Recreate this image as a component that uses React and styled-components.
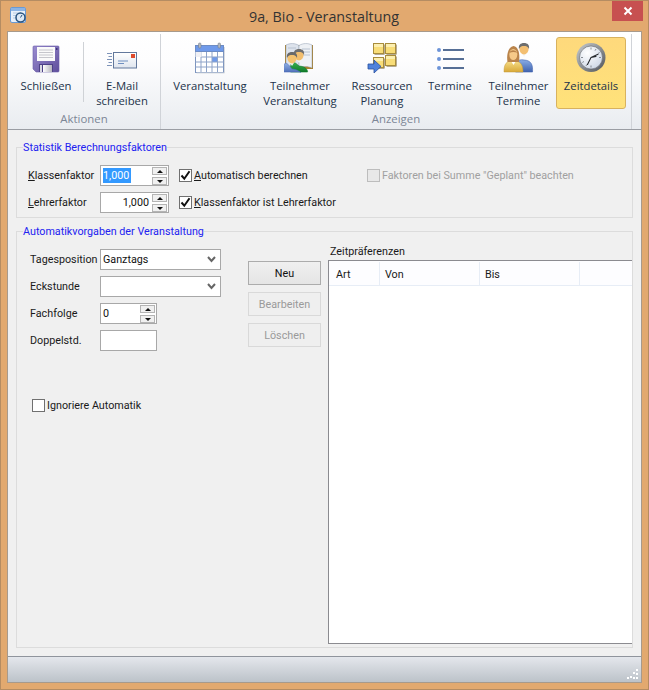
import React from "react";
import styled, { createGlobalStyle } from "styled-components";

const Global = createGlobalStyle`
  html, body { margin: 0; padding: 0; width: 649px; height: 690px; overflow: hidden; }
  #root { width: 649px; height: 690px; }
  * { box-sizing: border-box; }
`;

const Win = styled.div`
  width: 649px; height: 690px;
  background: #e2a96f;
  border: 1px solid #b58c62;
  padding: 0 6px 6px;
  display: flex; flex-direction: column;
  font-family: Roboto, "Open Sans", sans-serif;
  font-size: 10.75px;
  color: #1a1a1a;
`;
const TitleBar = styled.div`
  height: 30px; flex: none;
  display: grid; grid-template-columns: 1fr auto 1fr; align-items: start;
  margin-right: -1px;
`;
const TitleIcon = styled.svg`
  display: block; width: 16px; height: 16px; margin: 6px 0 0 3px;
`;
const TitleText = styled.div`
  font-family: "Open Sans", sans-serif;
  font-size: 14.3px; line-height: 30px; color: #333; padding: 1px 2px 0 0;
`;
const Close = styled.div`
  justify-self: end; width: 31px; height: 20px;
  background: #c75050; display: flex; align-items: center; justify-content: center;
`;
const Inner = styled.div`
  flex: 1; display: flex; flex-direction: column; min-height: 0;
  background: #f0f0f0; border: 1px solid #a79a8c;
`;
const Ribbon = styled.div`
  height: 98px; flex: none; padding: 2px 9px 0 0;
  display: flex;
  background: linear-gradient(#ffffff, #fdfdfe 30%, #e9ecf0);
  border-bottom: 1px solid #9a9da3;
  font-family: "Open Sans", sans-serif;
`;
const RGroup = styled.div`
  display: flex; flex-direction: column; align-items: stretch;
  width: ${p => p.$w}px; padding-top: 3px;
  border-right: 1px solid #d0d3d8;
`;
const RItems = styled.div`
  display: flex; height: 72px; padding-left: ${p => p.$pl}px;
`;
const RLabel = styled.div`
  text-align: center; color: #7c8696; font-size: 11.4px; line-height: 18px; padding-top: 1px;
`;
const RBtn = styled.div`
  width: ${p => p.$w}px; height: 72px; flex: none;
  padding-top: ${p => (p.$active ? 4 : 5)}px;
  display: flex; flex-direction: column; align-items: center;
  text-align: center; line-height: 15px; color: #22324a; font-size: 11.3px;
  ${p => p.$active && `
    background: linear-gradient(#fed97c, #ffe27a);
    border: 1px solid #d8b25e;
    border-radius: 3px;
  `}
`;
const RIcon = styled.svg`
  display: block; width: 32px; height: 32px; flex: none; margin-bottom: 4px;
`;
const RSep = styled.div`
  width: 1px; height: 60px; margin-top: 5px; flex: none; background: #cfd2d6;
`;
const Main = styled.div`
  flex: 1; min-height: 0; padding: 10px 8px 8px 8px;
  display: flex; flex-direction: column; gap: 6px;
`;
const Group = styled.fieldset`
  margin: 0; min-width: 0;
  border: 1px solid #dcdcdc;
  padding: 0;
  ${p => p.$grow && "flex: 1; min-height: 0; display: flex; flex-direction: column;"}
`;
const Legend = styled.legend`
  margin-left: 6px; padding: 0; line-height: 15px; color: #2222f0;
`;
const FactorBody = styled.div`
  padding: 10px 0 4px 11px;
  display: grid; grid-template-columns: 72px 79px 188px auto; grid-auto-rows: 21px; row-gap: 6px;
  align-items: center;
`;
const Label = styled.div`
  line-height: 15px; white-space: nowrap;
`;
const Field = styled.div`
  position: relative;
  width: ${p => p.$w}px; height: 21px; flex: none;
  background: #fff; border: 1px solid #a8a8a8;
  display: flex; align-items: center;
  justify-content: ${p => (p.$right ? "flex-end" : "flex-start")};
  padding: 0 ${p => (p.$right ? 19 : 2)}px 0 2px;
  line-height: 15px; color: #111;
`;
const Selected = styled.span`
  background: #3399ff; color: #fff; line-height: 15px; padding: 0 2px 0 0;
`;
const SpinCol = styled.div`
  position: absolute; right: 1px; top: 1px; width: 15px;
  display: flex; flex-direction: column; gap: 2px;
`;
const SpinBtn = styled.div`
  height: 8px; background: #f0f0f0; border: 1px solid #b4b4b4;
  display: flex; align-items: center; justify-content: center;
  &::after {
    content: ""; display: block; width: 0; height: 0;
    border-left: 3px solid transparent; border-right: 3px solid transparent;
    ${p => (p.$down ? "border-top: 3px solid #111;" : "border-bottom: 3px solid #111;")}
  }
`;
const Check = styled.div`
  display: flex; align-items: center; gap: 2px; line-height: 15px; white-space: nowrap;
  color: ${p => (p.$disabled ? "#a0a0a0" : "inherit")};
`;
const Box = styled.div`
  width: 13px; height: 13px; flex: none;
  background: ${p => (p.$disabled ? "#e8e8e8" : "#fff")};
  border: 1px solid ${p => (p.$disabled ? "#bdbdbd" : "#707070")};
  display: flex; align-items: center; justify-content: center;
`;
const AutoBody = styled.div`
  flex: 1; min-height: 0; display: flex;
`;
const FormCol = styled.div`
  width: 231px; flex: none; padding: 10px 0 0 13px;
  display: flex; flex-direction: column; gap: 6px;
`;
const FormRow = styled.div`
  display: flex; align-items: center; height: 21px;
`;
const FormLabel = styled(Label)`
  width: 70px; flex: none;
`;
const Chevron = styled.svg`
  position: absolute; right: 4px; top: 6px; width: 9px; height: 7px;
`;
const IgnoreRow = styled.div`
  margin: 41px 0 0 2px;
`;
const BtnCol = styled.div`
  width: 73px; flex: none; padding-top: 22px;
  display: flex; flex-direction: column; gap: 7px;
`;
const Btn = styled.div`
  height: 24px; display: flex; align-items: center; justify-content: center;
  border: 1px solid ${p => (p.$disabled ? "#d9d9d9" : "#acacac")};
  background: ${p => (p.$disabled ? "#efefef" : "linear-gradient(#f0f0f0, #e5e5e5)")};
  color: ${p => (p.$disabled ? "#9a9a9a" : "#111")};
`;
const TableCol = styled.div`
  flex: 1; min-width: 0; margin-left: 7px; padding: 5px 0 3px;
  display: flex; flex-direction: column;
`;
const TableTitle = styled.div`
  height: 16px; line-height: 15px; padding-left: 2px;
`;
const Table = styled.div`
  flex: 1; min-height: 0; background: #fff;
  border: 1px solid #8b8b90; border-right: 0;
`;
const THead = styled.div`
  height: 25px; display: flex; background: #fdfdff;
  border-bottom: 1px solid #e7edf6;
`;
const TH = styled.div`
  width: ${p => p.$w}px; flex: none; padding: 1px 0 0 ${p => p.$pl}px;
  line-height: 23px; border-right: 1px solid #e7edf6;
  margin: 1px 0 0;
`;
const Status = styled.div`
  height: 26px; flex: none; position: relative;
  background: linear-gradient(#e4e7ec, #bcc2c9);
  border-top: 1px solid #8f949c;
`;
const Grip = styled.svg`
  position: absolute; right: 2px; bottom: 2px; width: 12px; height: 11px;
`;

const Floppy = () => (
  <RIcon viewBox="0 0 32 32">
    <defs>
      <linearGradient id="fp" x1="0" x2="1" y1="0" y2="1">
        <stop offset="0" stopColor="#9a8cd0" /><stop offset="1" stopColor="#5f4f9c" />
      </linearGradient>
      <linearGradient id="fs" x1="0" x2="1" y1="0" y2="0">
        <stop offset="0" stopColor="#fff" /><stop offset="1" stopColor="#b5b5bd" />
      </linearGradient>
    </defs>
    <path d="M3 5a1 1 0 0 1 1-1h24a1 1 0 0 1 1 1v24a1 1 0 0 1-1 1H6l-3-3z" fill="url(#fp)" stroke="#6a5ca8" strokeWidth=".6" />
    <rect x="7" y="5" width="18" height="14" fill="#fafafa" />
    <path d="M9 8h14M9 10.500h14M9 13h14M9 15.500h14" stroke="#c6c6cc" strokeWidth="1" />
    <rect x="9" y="22" width="14" height="8" fill="#4d4187" />
    <rect x="13" y="23" width="9" height="7" fill="url(#fs)" />
    <rect x="10" y="23" width="2" height="7" fill="#d8d8e2" />
    <rect x="26" y="6" width="1.500" height="2" fill="#3f3478" />
  </RIcon>
);
const Mail = () => (
  <RIcon viewBox="0 0 32 32">
    <defs>
      <linearGradient id="ml" x1="0" x2="0" y1="0" y2="1">
        <stop offset="0" stopColor="#fff" /><stop offset="1" stopColor="#dfe5ee" />
      </linearGradient>
    </defs>
    <path d="M1 11.500h5M2.500 14.500h3.500M1 17.500h5M2.500 20.500h3.500M1 23.500h5" stroke="#7d93b8" strokeWidth="1" />
    <rect x="7.500" y="10.500" width="23" height="15.500" fill="url(#ml)" stroke="#62789c" />
    <rect x="25" y="12" width="4" height="4" fill="#dd4a2c" />
    <path d="M12 19h10M12 21.500h6" stroke="#6f8fc0" strokeWidth="1" />
  </RIcon>
);
const Calendar = () => (
  <RIcon viewBox="0 0 32 32">
    <rect x="1.500" y="3.500" width="28" height="27" fill="#fff" stroke="#7d95bf" />
    <rect x="1.500" y="3.500" width="28" height="6" fill="#6f9aea" stroke="#6d8cc4" />
    <rect x="4.500" y="1" width="2.500" height="5" rx="1" fill="#b5bac2" stroke="#6c7480" strokeWidth=".5" />
    <rect x="24" y="1" width="2.500" height="5" rx="1" fill="#b5bac2" stroke="#6c7480" strokeWidth=".5" />
    <rect x="18" y="15" width="5.500" height="5" fill="#6f9aea" />
    <path d="M7 10v20M12.500 10v20M18 10v20M23.500 10v20M7 15h22.500M1.500 20h28M1.500 25h28" stroke="#8ea3c8" strokeWidth="1" fill="none" />
    <path d="M1.500 10h6v5h-6z" fill="#f0f0f4" />
    <path d="M30.500 5v26h-28" stroke="#d8dbe0" fill="none" />
  </RIcon>
);
const person = (cx, top, hair, skin, c1, c2, id) => (
  <g>
    <defs>
      <linearGradient id={id} x1="0" x2="0" y1="0" y2="1">
        <stop offset="0" stopColor={c1} /><stop offset="1" stopColor={c2} />
      </linearGradient>
    </defs>
    <path d={`M${cx - 8.500} 30c-.5-8 1-13.500 8.500-${30 - top - 10 - 7}c7.500 .5 9 5 8.500 ${30 - top - 10 - 7}z`} fill={`url(#${id})`} stroke={c2} strokeWidth=".6" />
    <path d={`M${cx - 2.500} ${top + 10}l2.500 4l2.500-4z`} fill="#f5f5f5" />
    <ellipse cx={cx} cy={top + 6} rx="4.600" ry="5.400" fill={skin} />
    <path d={`M${cx - 5} ${top + 6}c-.8-4 1.500-6 5-6c3.500 0 5.800 2 5 6c-1-2.500-3-3-5-3c-2 0-4 .5-5 3z`} fill={hair} />
  </g>
);
const BookPeople = () => (
  <RIcon viewBox="0 0 32 32">
    <path d="M1 3h28v24H1z" fill="#a9802c" />
    <path d="M2 3c4-2 9-2 13 .5V26c-4-2-9-2-13 0z" fill="#dde3ec" stroke="#8f9cb0" strokeWidth=".5" />
    <path d="M15 3.500c4-2.500 9-2.500 13-.5v23c-4-2-9-2-13 0z" fill="#eef1f5" stroke="#8f9cb0" strokeWidth=".5" />
    <path d="M18 7h8M18 10h8M18 13h8M4 6h8" stroke="#b8c2d0" strokeWidth="1" />
    {person(15, 7, "#6f6f6f", "#f2be6e", "#38b04e", "#0f7a2a", "bp1")}
    {person(8, 10, "#6a6a6a", "#f4c26f", "#8fb0e4", "#4d6db8", "bp2")}
  </RIcon>
);
const sq = (x, y, s = 10) => (
  <g>
    <rect x={x + 1.500} y={y + 1.500} width={s} height={s} fill="#6e5a28" />
    <rect x={x + .5} y={y + .5} width={s} height={s} fill="#f8dd78" stroke="#a88c3c" />
    <rect x={x + 1} y={y + 1} width={s - 1} height="3" fill="#fcefb0" />
  </g>
);
const Resources = () => (
  <RIcon viewBox="0 0 32 32">
    {sq(7, 1)}
    {sq(19, 1)}
    {sq(19, 13)}
    {sq(7, 15)}
    <path d="M2 22h6v-4l7 6.500l-7 6.500v-4H2z" fill="#4f82dc" stroke="#2a50a0" strokeWidth=".8" />
  </RIcon>
);
const ListIcon = () => (
  <RIcon viewBox="0 0 32 32">
    {[8, 17, 26].map(y => (
      <g key={y}>
        <circle cx="5" cy={y} r="2" fill="#6d94d8" />
        <rect x="9" y={y - 1} width="21" height="2" fill="#566f96" />
      </g>
    ))}
  </RIcon>
);
const Couple = () => (
  <RIcon viewBox="0 0 32 32">
    {person(21, 1, "#6d6d6d", "#f3bf72", "#8aaee6", "#3f62ae", "cp1")}
    <defs>
      <linearGradient id="cw" x1="0" x2="0" y1="0" y2="1">
        <stop offset="0" stopColor="#f8df8a" /><stop offset="1" stopColor="#d8a838" />
      </linearGradient>
    </defs>
    <path d="M1 30c0-8 2-11 9.500-11.500C17 19 20 22 20 30z" fill="url(#cw)" stroke="#c09a3c" strokeWidth=".5" />
    <path d="M8 19l2.500 4l2.500-4z" fill="#fff" />
    <path d="M4.500 20c-1-6 0-15 6-16c5.500 1 6.500 9 5.500 16z" fill="#b9834a" />
    <ellipse cx="10.300" cy="12.500" rx="4" ry="5.500" fill="#f6c988" />
    <path d="M6.300 11c1-3 5.500-4 8 0c-2-1.500-5.500-1.500-8 0z" fill="#b9834a" />
  </RIcon>
);
const Clock = () => (
  <RIcon viewBox="0 0 32 32">
    <defs>
      <linearGradient id="ck" x1="0" x2="1" y1="0" y2="1">
        <stop offset="0" stopColor="#c8ccd0" /><stop offset="1" stopColor="#4f5358" />
      </linearGradient>
      <radialGradient id="cf" cx=".35" cy=".3" r=".9">
        <stop offset="0" stopColor="#ffffff" /><stop offset="1" stopColor="#c7d2e2" />
      </radialGradient>
    </defs>
    <circle cx="16" cy="15.500" r="14.500" fill="url(#ck)" />
    <circle cx="16" cy="15.500" r="11.500" fill="url(#cf)" stroke="#5a5e64" strokeWidth=".6" />
    <path d="M16 5.500v2M16 23.500v2M6 15.500h2M24 15.500h2M21 7l-1 1.700M11 24l1-1.700M24.700 10.500l-1.700 1M7.300 20.500l1.700-1" stroke="#70757c" strokeWidth=".8" />
    <path d="M16 15.500l7-3.200M16 15.500l-3.500 7M16 15.500l5-1" stroke="#25282c" strokeWidth="1.100" strokeLinecap="round" />
  </RIcon>
);

const CheckMark = () => (
  <svg width="11" height="11" viewBox="0 0 11 11">
    <path d="M1.500 5.500l2.800 3.200L9.500 1.300" fill="none" stroke="#111" strokeWidth="2" />
  </svg>
);
const ChevronIcon = () => (
  <Chevron viewBox="0 0 9 7">
    <path d="M1 1l3.500 4L8 1" fill="none" stroke="#666" strokeWidth="2" />
  </Chevron>
);
const Spin = () => (
  <SpinCol>
    <SpinBtn />
    <SpinBtn $down />
  </SpinCol>
);

export default function App() {
  return (
    <Win>
      <Global />
      <TitleBar>
        <TitleIcon viewBox="0 0 16 16">
          <rect x=".5" y=".5" width="15" height="15" rx="1.500" fill="#e8f0fa" stroke="#6a9ad4" />
          <rect x="1" y="1" width="14" height="3" fill="#8db4e4" />
          <path d="M3 6h8M3 8.500h4M3 11h4" stroke="#b6cbe4" />
          <circle cx="10.500" cy="10.500" r="4.500" fill="#dce8f6" stroke="#27527f" strokeWidth="1.500" />
          <path d="M10.500 10.500l1.500-2.500" stroke="#27527f" />
        </TitleIcon>
        <TitleText>9a, Bio - Veranstaltung</TitleText>
        <Close>
          <svg width="10" height="10" viewBox="0 0 10 10">
            <path d="M1.500 1.500l7 7M8.500 1.500l-7 7" stroke="#fff" strokeWidth="2" />
          </svg>
        </Close>
      </TitleBar>
      <Inner>
        <Ribbon>
          <RGroup $w={153}>
            <RItems $pl={1}>
              <RBtn $w={74}><Floppy />Schließen</RBtn>
              <RSep />
              <RBtn $w={76}><Mail />E-Mail<br />schreiben</RBtn>
            </RItems>
            <RLabel>Aktionen</RLabel>
          </RGroup>
          <RGroup $w={471}>
            <RItems $pl={4}>
              <RBtn $w={90}><Calendar />Veranstaltung</RBtn>
              <RBtn $w={90}><BookPeople />Teilnehmer<br />Veranstaltung</RBtn>
              <RBtn $w={74}><Resources />Ressourcen<br />Planung</RBtn>
              <RBtn $w={62}><ListIcon />Termine</RBtn>
              <RBtn $w={75}><Couple />Teilnehmer<br />Termine</RBtn>
              <RBtn $w={70} $active><Clock />Zeitdetails</RBtn>
            </RItems>
            <RLabel>Anzeigen</RLabel>
          </RGroup>
        </Ribbon>
        <Main>
          <Group>
            <Legend>Statistik Berechnungsfaktoren</Legend>
            <FactorBody>
              <Label><u>K</u>lassenfaktor</Label>
              <Field $w={69}>
                <Selected>1,000</Selected>
                <Spin />
              </Field>
              <Check><Box><CheckMark /></Box><span><u>A</u>utomatisch berechnen</span></Check>
              <Check $disabled><Box $disabled />Faktoren bei Summe "Geplant" beachten</Check>
              <Label><u>L</u>ehrerfaktor</Label>
              <Field $w={69} $right>
                1,000
                <Spin />
              </Field>
              <Check><Box><CheckMark /></Box><span><u>K</u>lassenfaktor ist Lehrerfaktor</span></Check>
            </FactorBody>
          </Group>
          <Group $grow>
            <Legend>Automatikvorgaben der Veranstaltung</Legend>
            <AutoBody>
              <FormCol>
                <FormRow>
                  <FormLabel>Tagesposition</FormLabel>
                  <Field $w={121}>Ganztags<ChevronIcon /></Field>
                </FormRow>
                <FormRow>
                  <FormLabel>Eckstunde</FormLabel>
                  <Field $w={121}><ChevronIcon /></Field>
                </FormRow>
                <FormRow>
                  <FormLabel>Fachfolge</FormLabel>
                  <Field $w={57}>0<Spin /></Field>
                </FormRow>
                <FormRow>
                  <FormLabel>Doppelstd.</FormLabel>
                  <Field $w={57} />
                </FormRow>
                <IgnoreRow>
                  <Check><Box />Ignoriere Automatik</Check>
                </IgnoreRow>
              </FormCol>
              <BtnCol>
                <Btn>Neu</Btn>
                <Btn $disabled>Bearbeiten</Btn>
                <Btn $disabled>Löschen</Btn>
              </BtnCol>
              <TableCol>
                <TableTitle>Zeitpräferenzen</TableTitle>
                <Table>
                  <THead>
                    <TH $w={51} $pl={7}>Art</TH>
                    <TH $w={100} $pl={5}>Von</TH>
                    <TH $w={100} $pl={5}>Bis</TH>
                  </THead>
                </Table>
              </TableCol>
            </AutoBody>
          </Group>
        </Main>
        <Status>
          <Grip viewBox="0 0 12 11">
            <path d="M9 0h2v2H9zM6 3h2v2H6zM9 4h2v2H9zM3 7h2v2H3zM6 8h2v2H6zM9 8h2v2H9zM0 8h2v2H0z" fill="#fff" />
          </Grip>
        </Status>
      </Inner>
    </Win>
  );
}
